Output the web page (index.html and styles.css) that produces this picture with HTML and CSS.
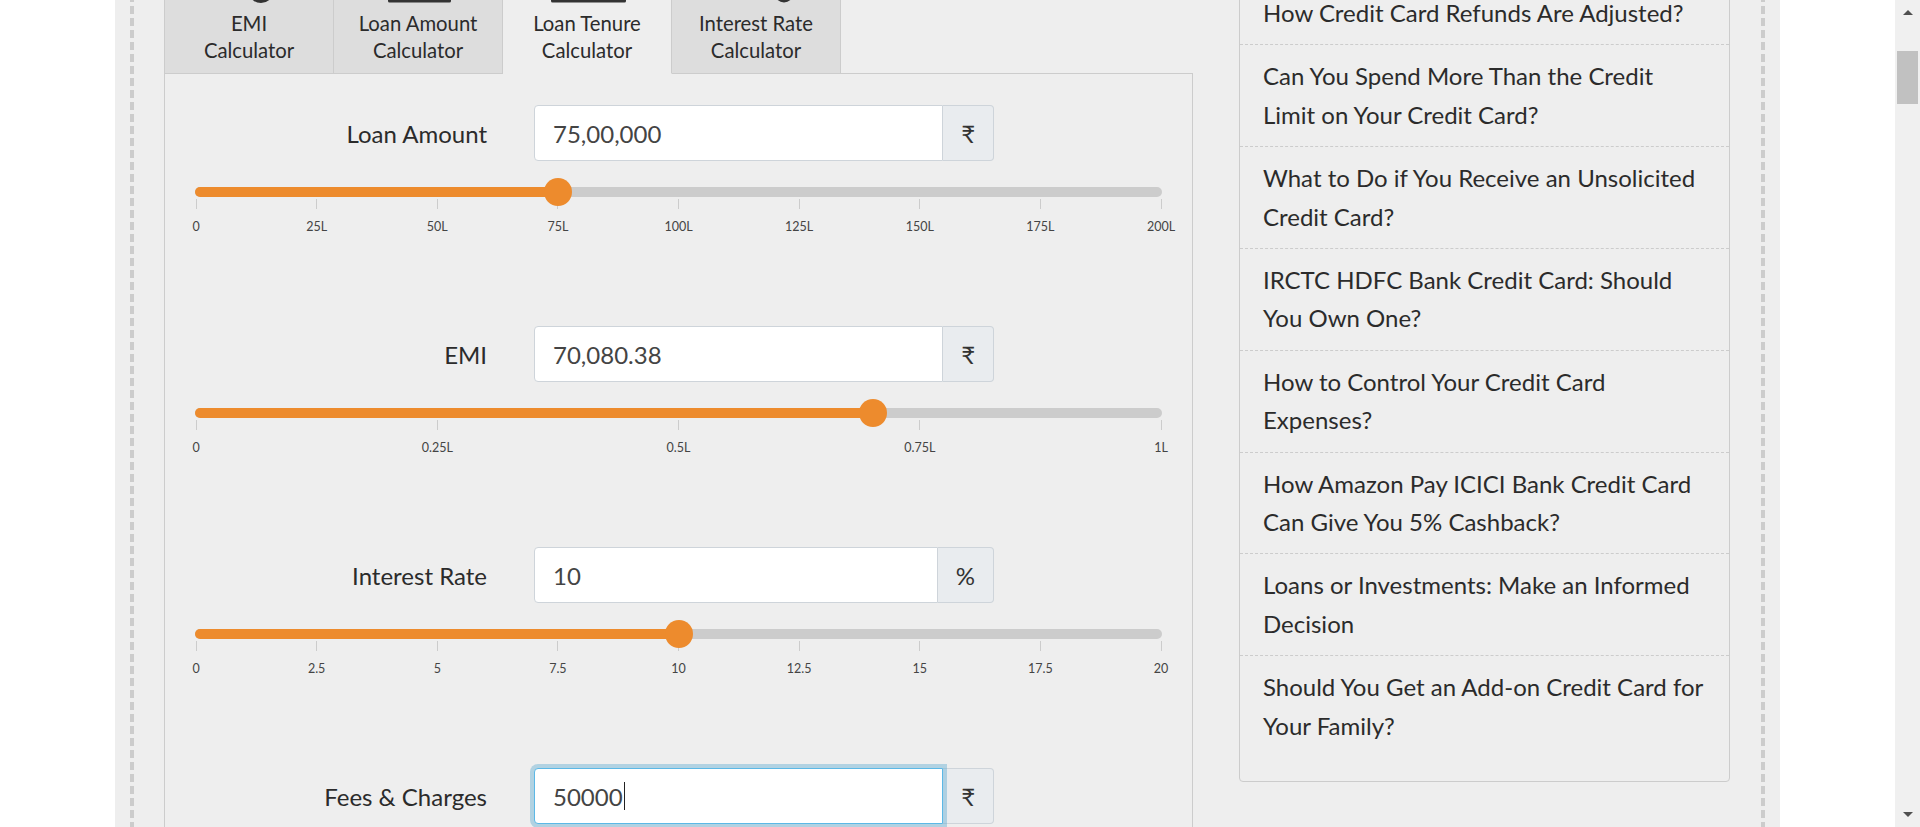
FILE: index.html
```html
<!DOCTYPE html>
<html lang="en">
<head>
<meta charset="utf-8">
<title>Loan Tenure Calculator</title>
<link rel="stylesheet" href="styles.css">
</head>
<body>
<div class="viewport">
  <div class="page">
    <div class="frame">
      <div class="layout">
        <main class="calc">
          <nav class="tabs">
            <a class="tab">
              <svg class="tab-icon" width="168" height="4" viewBox="0 0 168 4"><ellipse cx="96" cy="-8" rx="12" ry="11" fill="#333"/></svg>
              <span class="tab-text">EMI<br>Calculator</span>
            </a>
            <a class="tab">
              <svg class="tab-icon" width="168" height="4" viewBox="0 0 168 4"><rect x="54" y="-2" width="63" height="4.5" rx="1.5" fill="#333"/></svg>
              <span class="tab-text">Loan Amount<br>Calculator</span>
            </a>
            <a class="tab active">
              <svg class="tab-icon" width="168" height="4" viewBox="0 0 168 4"><rect x="48" y="-2" width="75" height="4.5" rx="1.5" fill="#333"/></svg>
              <span class="tab-text">Loan Tenure<br>Calculator</span>
            </a>
            <a class="tab">
              <svg class="tab-icon" width="168" height="4" viewBox="0 0 168 4"><ellipse cx="112" cy="-6" rx="9" ry="8.5" fill="#333"/></svg>
              <span class="tab-text">Interest Rate<br>Calculator</span>
            </a>
          </nav>

          <div class="tab-panel">
            <section class="calc-row">
              <div class="field">
                <label class="field-label">Loan Amount</label>
                <div class="input-group">
                  <div class="form-control">75,00,000</div>
                  <span class="addon">₹</span>
                </div>
              </div>
              <div class="slider">
                <div class="track">
                  <div class="fill" style="width: 37.5%"></div>
                  <div class="handle" style="left: 37.5%"></div>
                </div>
                <div class="ticks">
                  <div class="tick"><span>0</span></div>
                  <div class="tick"><span>25L</span></div>
                  <div class="tick"><span>50L</span></div>
                  <div class="tick"><span>75L</span></div>
                  <div class="tick"><span>100L</span></div>
                  <div class="tick"><span>125L</span></div>
                  <div class="tick"><span>150L</span></div>
                  <div class="tick"><span>175L</span></div>
                  <div class="tick"><span>200L</span></div>
                </div>
              </div>
            </section>

            <section class="calc-row">
              <div class="field">
                <label class="field-label">EMI</label>
                <div class="input-group">
                  <div class="form-control">70,080.38</div>
                  <span class="addon">₹</span>
                </div>
              </div>
              <div class="slider">
                <div class="track">
                  <div class="fill" style="width: 70.08%"></div>
                  <div class="handle" style="left: 70.08%"></div>
                </div>
                <div class="ticks">
                  <div class="tick"><span>0</span></div>
                  <div class="tick"><span>0.25L</span></div>
                  <div class="tick"><span>0.5L</span></div>
                  <div class="tick"><span>0.75L</span></div>
                  <div class="tick"><span>1L</span></div>
                </div>
              </div>
            </section>

            <section class="calc-row">
              <div class="field">
                <label class="field-label">Interest Rate</label>
                <div class="input-group">
                  <div class="form-control">10</div>
                  <span class="addon">%</span>
                </div>
              </div>
              <div class="slider">
                <div class="track">
                  <div class="fill" style="width: 50%"></div>
                  <div class="handle" style="left: 50%"></div>
                </div>
                <div class="ticks">
                  <div class="tick"><span>0</span></div>
                  <div class="tick"><span>2.5</span></div>
                  <div class="tick"><span>5</span></div>
                  <div class="tick"><span>7.5</span></div>
                  <div class="tick"><span>10</span></div>
                  <div class="tick"><span>12.5</span></div>
                  <div class="tick"><span>15</span></div>
                  <div class="tick"><span>17.5</span></div>
                  <div class="tick"><span>20</span></div>
                </div>
              </div>
            </section>

            <section class="calc-row">
              <div class="field">
                <label class="field-label">Fees &amp; Charges</label>
                <div class="input-group">
                  <div class="form-control focused">50000<span class="caret"></span></div>
                  <span class="addon">₹</span>
                </div>
              </div>
            </section>
          </div>
        </main>

        <aside class="sidebar">
          <ul class="article-list">
            <li><a>How Credit Card Refunds Are Adjusted?</a></li>
            <li><a>Can You Spend More Than the Credit Limit on Your Credit Card?</a></li>
            <li><a>What to Do if You Receive an Unsolicited Credit Card?</a></li>
            <li><a>IRCTC HDFC Bank Credit Card: Should You Own One?</a></li>
            <li><a>How to Control Your Credit Card Expenses?</a></li>
            <li><a>How Amazon Pay ICICI Bank Credit Card Can Give You 5% Cashback?</a></li>
            <li><a>Loans or Investments: Make an Informed Decision</a></li>
            <li><a>Should You Get an Add-on Credit Card for Your Family?</a></li>
          </ul>
        </aside>
      </div>
    </div>
  </div>
</div>
<div class="scrollbar">
  <div class="sb-btn"><span class="sb-up"></span></div>
  <div class="sb-track"><div class="sb-thumb"></div></div>
  <div class="sb-btn"><span class="sb-down"></span></div>
</div>
</body>
</html>
```

FILE: styles.css
```css
* { box-sizing: border-box; }

html, body {
  margin: 0;
  height: 827px;
  overflow: hidden;
}

body {
  display: flex;
  font-family: Lato, "Noto Sans", "DejaVu Sans", sans-serif;
  color: #333;
  background: #fff;
}

.viewport {
  flex: 1;
  height: 827px;
  overflow: hidden;
  background: #fff;
}

.page {
  width: 1665px;
  height: 100%;
  margin: 0 auto;
  padding: 0 15px;
  background: #eee;
}

.frame {
  height: 100%;
  padding: 0 35px 0 34px;
  background-image:
    linear-gradient(#ccc 8px, transparent 8px),
    linear-gradient(#ccc 8px, transparent 8px);
  background-size: 4px 12px, 4px 12px;
  background-position: left 6px, right 6px;
  background-repeat: repeat-y, repeat-y;
}

.layout {
  display: flex;
  align-items: flex-start;
  gap: 46px;
}

/* ---------- calculator ---------- */
.calc {
  width: 1029px;
  flex: none;
}

.tabs {
  display: flex;
  height: 74px;
}

.tabs::after {
  content: "";
  flex: 1;
  border-bottom: 1px solid #ccc;
}

.tab {
  flex: 0 0 168px;
  height: 74px;
  display: flex;
  flex-direction: column;
  align-items: center;
  padding-bottom: 9px;
  background: #ddd;
  border-right: 1px solid #ccc;
  border-bottom: 1px solid #ccc;
  font-size: 20.3px;
  line-height: 27px;
  text-align: center;
  color: #2b2b2b;
}

.tab:first-child {
  border-left: 1px solid #ccc;
}

.tab.active {
  background: #eee;
  border-bottom-color: transparent;
}

.tab-icon {
  flex: none;
  display: block;
}

.tab-text {
  margin-top: auto;
}

.tab-panel {
  border: 1px solid #ccc;
  border-top: none;
  padding: 31px 30px 0;
  min-height: 900px;
}

.calc-row {
  margin-bottom: 92px;
}

.field {
  display: grid;
  grid-template-columns: 292px 460px;
  column-gap: 47px;
  align-items: center;
}

.field-label {
  text-align: right;
  font-size: 24px;
  color: #2b2b2b;
}

.input-group {
  display: flex;
  height: 56px;
}

.form-control {
  flex: 1;
  display: flex;
  align-items: center;
  padding: 0 18px;
  background: #fff;
  border: 1px solid #ced4da;
  border-radius: 4px 0 0 4px;
  font-size: 24px;
  color: #444;
}

.form-control.focused {
  position: relative;
  z-index: 1;
  border-color: #5cb8e6;
  box-shadow: 0 0 0 4px rgba(102, 175, 210, 0.45);
}

.caret {
  display: inline-block;
  width: 1px;
  height: 28px;
  margin-left: 1px;
  background: #222;
}

.addon {
  display: flex;
  align-items: center;
  padding: 0 18px;
  background: #e9ecef;
  border: 1px solid #ced4da;
  border-left: none;
  border-radius: 0 4px 4px 0;
  font-size: 24px;
  color: #333;
}

/* ---------- slider ---------- */
.slider {
  margin-top: 26px;
}

.track {
  position: relative;
  height: 10px;
  border-radius: 5px;
  background: #ccc;
}

.fill {
  height: 100%;
  background: #ed8b2d;
  border-radius: 5px 0 0 5px;
}

.handle {
  position: absolute;
  top: 50%;
  width: 28px;
  height: 28px;
  border-radius: 50%;
  background: #ed8b2d;
  transform: translate(-50%, -50%);
}

.ticks {
  display: flex;
  justify-content: space-between;
  padding: 0 1px;
  margin-top: 2px;
}

.tick {
  width: 0;
  display: flex;
  flex-direction: column;
  align-items: center;
}

.tick::before {
  content: "";
  display: block;
  width: 1px;
  height: 10px;
  background: #ccc;
  flex: none;
}

.tick span {
  margin-top: 10px;
  font-size: 12.5px;
  line-height: 15px;
  white-space: nowrap;
  color: #444;
}

/* ---------- sidebar ---------- */
.sidebar {
  width: 491px;
  flex: none;
  margin-top: -19px;
  border: 1px solid #ccc;
  border-radius: 4px;
  background: #eee;
  padding-bottom: 24px;
}

.article-list {
  list-style: none;
  margin: 0;
  padding: 0;
}

.article-list li {
  padding: 12px 23px;
  border-bottom: 1px dashed #ccc;
  font-size: 24px;
  line-height: 38.4px;
}

.article-list li:last-child {
  border-bottom: none;
}

.article-list a {
  color: #2b2b2b;
  text-decoration: none;
}

/* ---------- fake scrollbar ---------- */
.scrollbar {
  flex: 0 0 25px;
  height: 827px;
  display: flex;
  flex-direction: column;
  background: #f0f0f0;
}

.sb-btn {
  height: 25px;
  display: flex;
  align-items: center;
  justify-content: center;
}

.sb-up,
.sb-down {
  width: 0;
  height: 0;
  border-left: 5.5px solid transparent;
  border-right: 5.5px solid transparent;
}

.sb-up {
  border-bottom: 5px solid #505050;
}

.sb-down {
  border-top: 5px solid #505050;
}

.sb-track {
  flex: 1;
  padding: 26px 2px 0;
}

.sb-thumb {
  height: 53px;
  background: #c1c1c1;
}
```
